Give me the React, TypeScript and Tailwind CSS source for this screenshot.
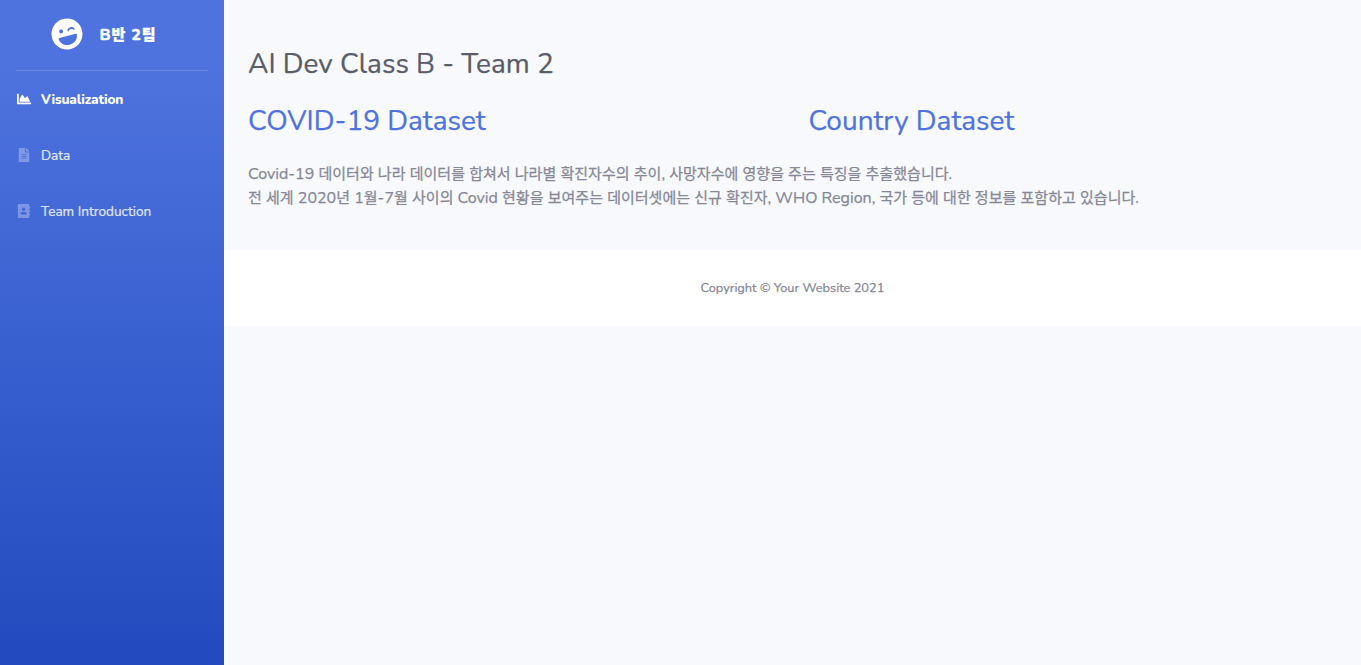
import type { ReactNode } from "react";
import type { IconType } from "react-icons";
import { FaLaughWink, FaChartArea, FaFileAlt, FaAddressBook } from "react-icons/fa";

// Sets Hangul runs slightly smaller than the Latin text around them.
function Mixed({ children }: { children: string }): ReactNode {
  return children.split(/([\uac00-\ud7a3]+)/).map((part, i) =>
    i % 2 ? (
      <span key={i} className="text-[15px] leading-none tracking-[0.03px]">
        {part}
      </span>
    ) : (
      part
    ),
  );
}

function NavItem({ icon: Icon, label, active = false }: { icon: IconType; label: string; active?: boolean }) {
  return (
    <a className={active ? "flex h-14 items-center gap-2 px-4 pt-0.5 font-extrabold text-white" : "flex h-14 items-center gap-2 px-4 pt-0.5 text-white/80 [-webkit-text-stroke:0.2px]"}>
      <span className={active ? "flex w-[17px] justify-center pr-px pb-0.5" : "flex w-[17px] justify-center pr-px pb-0.5 text-white/30 [-webkit-text-stroke:0px]"}>
        <Icon className="size-[14px]" />
      </span>
      <span className={active ? "tracking-[-0.14px]" : ""}>{label}</span>
    </a>
  );
}

export default function App() {
  return (
    <div className="flex h-[665px] w-full overflow-hidden bg-[#f8f9fc] font-['Nunito','Noto_Sans_CJK_KR',sans-serif] text-[#858796]">
      <aside className="flex w-[224px] shrink-0 flex-col bg-linear-to-b from-[#4e73df] from-10% to-[#224abe]">
        <a className="flex h-[70px] items-center pb-0.5 pl-[51px] text-white">
          <FaLaughWink className="size-8 -rotate-15" />
          <span className="ml-[16.5px] whitespace-nowrap pt-px text-base font-extrabold tracking-[0.8px] [-webkit-text-stroke:0.3px]">
            B<span className="text-[15px] leading-none">반</span> 2<span className="text-[15px] leading-none">팀</span>
          </span>
        </a>
        <hr className="mx-4 border-t border-white/15" />
        <nav className="text-[13.6px] leading-[20px]">
          <NavItem icon={FaChartArea} label="Visualization" active />
          <NavItem icon={FaFileAlt} label="Data" />
          <NavItem icon={FaAddressBook} label="Team Introduction" />
        </nav>
      </aside>
      <main className="min-w-0 flex-1 [-webkit-text-stroke:0.25px]">
        <div className="h-[250px] px-6 pt-[47px]">
          <h1 className="whitespace-nowrap text-[28px] leading-[34px] text-[#5a5c69]">AI Dev Class B - Team 2</h1>
          <div className="mt-[23px] flex text-[28px] leading-[34px] text-[#4e73df]">
            <h2 className="w-[560.5px]">COVID-19 Dataset</h2>
            <h2>Country Dataset</h2>
          </div>
          <p className="mt-6 whitespace-nowrap text-base leading-6">
            <Mixed>Covid-19 데이터와 나라 데이터를 합쳐서 나라별 확진자수의 추이, 사망자수에 영향을 주는 특징을 추출했습니다.</Mixed>
          </p>
          <p className="whitespace-nowrap text-base leading-6">
            <Mixed>전 세계 2020년 1월-7월 사이의 Covid 현황을 보여주는 데이터셋에는 신규 확진자, WHO Region, 국가 등에 대한 정보를 포함하고 있습니다.</Mixed>
          </p>
        </div>
        <footer className="flex h-[76px] items-center justify-center bg-white pt-0.5 text-[12.8px]">Copyright © Your Website 2021</footer>
      </main>
    </div>
  );
}
